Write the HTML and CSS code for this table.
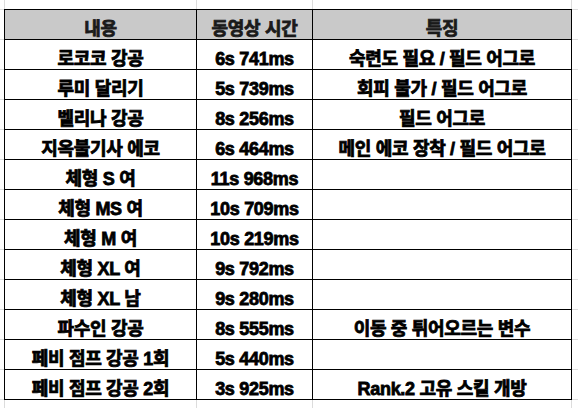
FILE: index.html
```html
<!DOCTYPE html>
<html lang="ko">
<head>
<meta charset="utf-8">
<link rel="stylesheet" href="styles.css">
</head>
<body>
<div class="sheet">
  <div class="grid">
    <div class="cell head">내용</div>
    <div class="cell head">동영상 시간</div>
    <div class="cell head">특징</div>

    <div class="cell">로코코 강공</div>
    <div class="cell">6s 741ms</div>
    <div class="cell">숙련도 필요 / 필드 어그로</div>

    <div class="cell">루미 달리기</div>
    <div class="cell">5s 739ms</div>
    <div class="cell">회피 불가 / 필드 어그로</div>

    <div class="cell">벨리나 강공</div>
    <div class="cell">8s 256ms</div>
    <div class="cell">필드 어그로</div>

    <div class="cell">지옥불기사 에코</div>
    <div class="cell">6s 464ms</div>
    <div class="cell">메인 에코 장착 / 필드 어그로</div>

    <div class="cell">체형 S 여</div>
    <div class="cell">11s 968ms</div>
    <div class="cell"></div>

    <div class="cell">체형 MS 여</div>
    <div class="cell">10s 709ms</div>
    <div class="cell"></div>

    <div class="cell">체형 M 여</div>
    <div class="cell">10s 219ms</div>
    <div class="cell"></div>

    <div class="cell">체형 XL 여</div>
    <div class="cell">9s 792ms</div>
    <div class="cell"></div>

    <div class="cell">체형 XL 남</div>
    <div class="cell">9s 280ms</div>
    <div class="cell"></div>

    <div class="cell">파수인 강공</div>
    <div class="cell">8s 555ms</div>
    <div class="cell">이동 중 튀어오르는 변수</div>

    <div class="cell">페비 점프 강공 1회</div>
    <div class="cell">5s 440ms</div>
    <div class="cell"></div>

    <div class="cell">페비 점프 강공 2회</div>
    <div class="cell">3s 925ms</div>
    <div class="cell">Rank.2 고유 스킬 개방</div>
  </div>
</div>
</body>
</html>
```

FILE: styles.css
```css
html, body {
  margin: 0;
  padding: 0;
}

body {
  width: 578px;
  height: 408px;
  overflow: hidden;
  background-color: #ffffff;
  background-image:
    linear-gradient(to right, transparent 4px, #dcdcdc 4px, #dcdcdc 5px, transparent 5px),
    linear-gradient(to right, transparent 196px, #dcdcdc 196px, #dcdcdc 197px, transparent 197px),
    linear-gradient(to right, transparent 312px, #dcdcdc 312px, #dcdcdc 313px, transparent 313px),
    linear-gradient(to right, transparent 571px, #dcdcdc 571px, #dcdcdc 572px, transparent 572px),
    repeating-linear-gradient(to bottom, #dcdcdc 0, #dcdcdc 1px, transparent 1px, transparent 30px);
  background-position: 0 0, 0 0, 0 0, 0 0, 0 9px;
  background-repeat: no-repeat, no-repeat, no-repeat, no-repeat, repeat;
}

.sheet {
  padding: 9px 0 0 4px;
}

.grid {
  display: grid;
  grid-template-columns: 192px 116px 259px;
  grid-auto-rows: 30px;
  width: 568px;
  box-sizing: border-box;
  border-left: 1px solid #000;
  border-top: 1px solid #000;
  background: #ffffff;
  font-family: "Liberation Sans", "Noto Sans CJK KR", sans-serif;
  font-weight: 700;
  font-size: 18px;
  color: #000;
}

.cell {
  box-sizing: border-box;
  border-right: 1px solid #000;
  border-bottom: 1px solid #000;
  display: flex;
  align-items: flex-end;
  justify-content: center;
  line-height: 20px;
  padding-bottom: 0;
  white-space: nowrap;
  letter-spacing: -0.3px;
  -webkit-text-stroke: 0.8px currentColor;
}

.head {
  background: #c9c9c9;
  color: #1a1a1a;
}
```
